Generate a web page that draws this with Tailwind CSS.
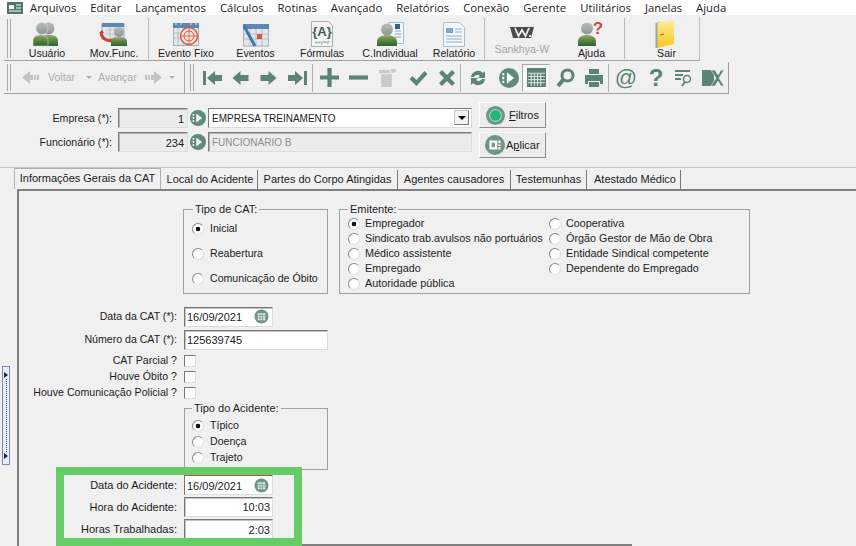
<!DOCTYPE html>
<html lang="en">
<head>
<meta charset="UTF-8">
<title>Sankhya CAT</title>
<script src="https://cdn.jsdelivr.net/npm/@tailwindcss/browser@4"></script>
</head>
<body class="bg-[#f0f0f0] h-[546px] w-[856px] overflow-hidden relative font-['Liberation_Sans',sans-serif] text-[11px] text-[#1c1c1c]">

<svg class="absolute w-0 h-0">
  <defs>
    <linearGradient id="body" x1="0" y1="0" x2="0" y2="1"><stop offset="0" stop-color="#9aa88c"/><stop offset=".45" stop-color="#5f8a34"/><stop offset="1" stop-color="#2f5f45"/></linearGradient>
    <linearGradient id="head" x1="0" y1="0" x2="0" y2="1"><stop offset="0" stop-color="#b9bdba"/><stop offset="1" stop-color="#8f9692"/></linearGradient>
    <linearGradient id="door" x1="0" y1="0" x2="0" y2="1"><stop offset="0" stop-color="#fdeb9a"/><stop offset="1" stop-color="#f7c81c"/></linearGradient>
  </defs>
  <symbol id="nav" viewBox="0 0 16 14"><path d="M0 7 8 0v4h8v6H8v4z" fill="currentColor"/></symbol>
  <symbol id="pick" viewBox="0 0 14 14"><circle cx="7" cy="7" r="7" fill="#5f8b78"/><path d="M5.500 3l5 4-5 4z" fill="#fff"/><path d="M3 3.500v1.500M3 6.200v1.600M3 9v1.500" stroke="#fff" stroke-width="1.300"/></symbol>
  <symbol id="cal" viewBox="0 0 16 16"><circle cx="8" cy="8" r="7.500" fill="#6f9684"/><rect x="4" y="4.500" width="8" height="7.500" fill="#dfe8e3"/><path d="M4 7h8M4 9.500h8M6.500 4.500v7.500M9 4.500v7.500" stroke="#6f9684" stroke-width=".7"/></symbol>
</svg>

<!-- Menu -->
<nav class="h-[15px] bg-white flex items-center pl-[7px] gap-[14px] text-[11.3px] font-['Open_Sans',sans-serif] text-[#222] leading-none">
  <svg class="w-[16px] h-[12px] -mr-[7px]" viewBox="0 0 16 12"><rect width="16" height="12" fill="#4d7a68"/><rect x="2" y="3" width="5" height="4" fill="#fff"/><path d="M9 3h5M9 6h5M2 9h12" stroke="#fff"/></svg>
  <span>Arquivos</span><span>Editar</span><span>Lançamentos</span><span>Cálculos</span><span>Rotinas</span><span>Avançado</span><span>Relatórios</span><span>Conexão</span><span>Gerente</span><span>Utilitários</span><span>Janelas</span><span>Ajuda</span>
</nav>

<!-- Toolbar 1 -->
<div class="mt-[2px] ml-[4px] w-[696px] h-[44px] flex border-b border-[#a0a0a0] border-r border-r-[#c0c0c0] text-[10.6px] leading-[11px]">
  <div class="w-[10px] flex gap-[2px] pl-[3px] py-[2px] shrink-0"><i class="w-[1px] bg-[#a8a8a8]"></i><i class="w-[1px] bg-[#a8a8a8]"></i></div>
  <button class="w-[66px] flex flex-col items-center pt-[3px]">
    <span class="h-[28px] flex items-center"><svg class="w-[25px] h-[25px] mr-[4px]" viewBox="0 0 25 25"><circle cx="15.500" cy="6.500" r="6" fill="url(#head)"/><circle cx="9" cy="6.500" r="6" fill="url(#head)" stroke="#d8dad8" stroke-width=".6"/><path d="M8 13h9c5 0 8 2 8 6v5H8z" fill="url(#body)"/><path d="M0 24v-5c0-4 3-6 7-6s8 2 8 6v5z" fill="url(#body)" stroke="#cfd6c8" stroke-width=".6"/></svg></span>
    <span>Usuário</span></button>
  <button class="w-[68px] flex flex-col items-center pt-[3px]">
    <span class="h-[28px] flex items-center"><svg class="w-[28px] h-[24px] mr-[2px]" viewBox="0 0 28 24"><rect x="3" y="2" width="22" height="15" fill="#dfe5ea" stroke="#9fb0bd"/><rect x="3" y="1" width="22" height="4" fill="#5d87b5"/><path d="M7 8h16M7 12h16M11 5v12M16 5v12" stroke="#a9b4bb" stroke-width=".7"/><path d="M2 11c1 6 7 9 12 7" stroke="#c8402e" stroke-width="3" fill="none"/><path d="M0 11h5l-2-3z" fill="#c8402e"/><circle cx="20" cy="10" r="5" fill="url(#head)"/><path d="M12 24v-4c0-4 3-5 8-5s8 1 8 5v4z" fill="url(#body)"/></svg></span>
    <span>Mov.Func.</span></button>
  <i class="w-[1px] bg-[#b8b8b8] my-[1px]"></i>
  <button class="w-[74px] flex flex-col items-center pt-[3px]">
    <span class="h-[28px] flex items-center"><svg class="w-[26px] h-[24px]" viewBox="0 0 26 24"><rect x=".5" y="2" width="25" height="21.500" fill="#e4e8ec" stroke="#a5b0b8"/><rect x="0" y="1" width="26" height="5" fill="#5d87b5"/><path d="M3 0v3M8 0v3M18 0v3M23 0v3" stroke="#e8eef3"/><path d="M1 11h12M1 16h12M5 6v17M10 6v17" stroke="#a5b0b8" stroke-width=".7"/><circle cx="16" cy="14" r="8.500" fill="#f3e4de" stroke="#d9573f" stroke-width="1.400"/><circle cx="16" cy="14" r="5" fill="none" stroke="#d9573f"/><path d="M7.500 14h17M16 5.500v17" stroke="#d9573f" stroke-width=".8"/></svg></span>
    <span>Evento Fixo</span></button>
  <button class="w-[65px] flex flex-col items-center pt-[3px]">
    <span class="h-[28px] flex items-center"><svg class="w-[26px] h-[24px] mt-[1px]" viewBox="0 0 26 24"><rect x=".5" y="2" width="25" height="21" fill="#e4e8ec" stroke="#a5b0b8"/><rect x="0" y="1" width="26" height="5" fill="#5d87b5"/><path d="M1 11h24M1 16h24M7 6v17M13 6v17M19 6v17" stroke="#a5b0b8" stroke-width=".7"/><path d="M1 3l11 20" stroke="#3f76a8" stroke-width="3"/><rect x="14" y="11" width="5" height="5" fill="#d9573f"/></svg></span>
    <span>Eventos</span></button>
  <button class="w-[68px] flex flex-col items-center pt-[3px]">
    <span class="h-[28px] flex items-center"><svg class="w-[22px] h-[26px]" viewBox="0 0 22 26"><path d="M.5.500h17l4 4v21H.5z" fill="#f4f4f2" stroke="#a8aea8"/><text x="11" y="15" text-anchor="middle" font-size="13" font-weight="700" font-family="Liberation Sans" fill="#3d5f50">{A}</text><text x="11" y="23" text-anchor="middle" font-size="5.500" font-family="Liberation Sans" fill="#6f8a7d">x+y=z</text></svg></span>
    <span>Fórmulas</span></button>
  <button class="w-[68px] flex flex-col items-center pt-[3px]">
    <span class="h-[28px] flex items-center"><svg class="w-[27px] h-[24px]" viewBox="0 0 27 24"><rect x="11.500" y=".5" width="15" height="21" fill="#f2f5f8" stroke="#a9bccb"/><path d="M18 9h6M18 12h6M18 15h6" stroke="#8ba6bd"/><rect x="18" y="2" width="5" height="5" fill="#2f5f8a"/><circle cx="10" cy="7.500" r="6" fill="url(#head)"/><path d="M0 24v-4c0-5 5-7 10-7s10 2 10 7v4z" fill="url(#body)"/></svg></span>
    <span>C.Individual</span></button>
  <button class="w-[60px] flex flex-col items-center pt-[3px]">
    <span class="h-[28px] flex items-center"><svg class="w-[22px] h-[25px]" viewBox="0 0 22 25"><path d="M.5.500h16l5 5v19H.5z" fill="#f3f7fa" stroke="#a9bccb"/><rect x="3" y="6" width="7" height="5" fill="#7aa7cf"/><path d="M12 7h7M12 10h7M3 14h16M3 17h16M3 20h16" stroke="#8ab0d0"/></svg></span>
    <span>Relatório</span></button>
  <i class="w-[1px] bg-[#b8b8b8] my-[1px]"></i>
  <button class="w-[74px] flex flex-col items-center pt-[3px]">
    <span class="h-[24px] flex items-center"><svg class="w-[24px] h-[13px]" viewBox="0 0 24 13"><path d="M0 1h24l-3 11H3z" fill="#4c4c4c"/><path d="M5 2l3.500 8 3.500-6 3.500 6L19 2" stroke="#f0f0f0" stroke-width="1.800" fill="none"/><rect x="19" y="9" width="2" height="2" fill="#f0f0f0"/></svg></span>
    <span class="text-[#a3a3a3]">Sankhya-W</span></button>
  <button class="w-[65px] flex flex-col items-center pt-[3px]">
    <span class="h-[28px] flex items-center"><svg class="w-[27px] h-[24px] overflow-visible" viewBox="0 0 27 24"><circle cx="9" cy="6.500" r="6" fill="url(#head)"/><path d="M0 24v-4c0-5 4-7 9-7s9 2 9 7v4z" fill="url(#body)"/><text x="20" y="12" text-anchor="middle" font-size="17" font-weight="700" font-family="Liberation Sans" fill="#c0504d">?</text></svg></span>
    <span>Ajuda</span></button>
  <i class="w-[1px] bg-[#b8b8b8] my-[1px]"></i>
  <button class="flex-1 flex flex-col items-center pt-[3px]">
    <span class="h-[28px] flex items-center"><svg class="w-[20px] h-[28px] ml-[5px]" viewBox="0 0 20 28"><path d="M2 2h16v22H2z" fill="#bfc4c8"/><path d="M2 3 19 0v24L2 28z" fill="url(#door)"/><path d="M1.500 3v25" stroke="#a3a3a3" stroke-width="2"/><path d="M5 15l4-1" stroke="#8a6d10"/></svg></span>
    <span class="ml-[9px]">Sair</span></button>
</div>

<!-- Toolbar 2 -->
<div class="ml-[4px] mt-[1px] w-[725px] h-[32px] flex items-center text-[#5a8573] border-b border-[#a0a0a0] border-r border-r-[#a0a0a0] text-[10.6px]">
  <div class="w-[10px] h-full flex gap-[2px] pl-[3px] py-[2px] shrink-0"><i class="w-[1px] bg-[#a8a8a8]"></i><i class="w-[1px] bg-[#a8a8a8]"></i></div>
  <div class="w-[171px] h-full flex items-center shrink-0 pl-[8px] border-r border-[#a8a8a8] text-[#ababab]">
    <svg class="w-[19px] h-[13px] shrink-0" viewBox="0 0 19 13"><path d="M0 6.500 8 0v4h3v5H8v4zM12 4h2v5h-2zM15 4h2v5h-2z" fill="#c4c4c4"/></svg>
    <span class="ml-[7px]">Voltar</span>
    <i class="ml-[11px] w-0 h-0 border-x-[3px] border-x-transparent border-t-[3px] border-t-[#b0b0b0]"></i>
    <span class="ml-[6px]">Avançar</span>
    <svg class="w-[19px] h-[13px] ml-[6px] shrink-0" viewBox="0 0 19 13"><path d="M19 6.500 11 0v4H8v5h3v4zM7 4H5v5h2zM4 4H2v5h2z" fill="#c4c4c4"/></svg>
    <i class="ml-[7px] w-0 h-0 border-x-[3px] border-x-transparent border-t-[3px] border-t-[#b0b0b0]"></i>
  </div>
  <div class="w-[13px] h-full flex gap-[2px] pl-[5px] py-[2px] shrink-0"><i class="w-[1px] bg-[#a8a8a8]"></i><i class="w-[1px] bg-[#a8a8a8]"></i></div>
  <button class="w-[28px] flex justify-center"><svg class="w-[19px] h-[14px]" viewBox="0 0 19 14"><path d="M0 0h3v14H0zM4 7l8-7v4h7v6h-7v4z" fill="currentColor"/></svg></button>
  <button class="w-[28px] flex justify-center"><svg class="w-[17px] h-[14px]"><use href="#nav"/></svg></button>
  <button class="w-[28px] flex justify-center"><svg class="w-[17px] h-[14px] -scale-x-100"><use href="#nav"/></svg></button>
  <button class="w-[30px] flex justify-center"><svg class="w-[19px] h-[14px]" viewBox="0 0 19 14"><path d="M19 0h-3v14h3zM15 7 7 0v4H0v6h7v4z" fill="currentColor"/></svg></button>
  <i class="w-[1px] h-[28px] bg-[#b0b0b0]"></i>
  <button class="w-[32px] flex justify-center"><svg class="w-[19px] h-[19px]" viewBox="0 0 18 18"><path d="M7 0h4v7h7v4h-7v7H7v-7H0V7h7z" fill="currentColor"/></svg></button>
  <button class="w-[27px] flex justify-center"><svg class="w-[19px] h-[19px]" viewBox="0 0 18 18"><path d="M0 7h18v4H0z" fill="currentColor"/></svg></button>
  <button class="w-[31px] flex justify-center"><svg class="w-[19px] h-[19px]" viewBox="0 0 18 18"><path d="M3 6h10v12H3zM1 2h10l1 3H1zM12 1h5v3l-4 1z" fill="#c9c9c9"/></svg></button>
  <button class="w-[30px] flex justify-center"><svg class="w-[19px] h-[18px]" viewBox="0 0 18 18"><path d="M0 10l3-3 4 4 8-9 3 3L7 17z" fill="currentColor"/></svg></button>
  <button class="w-[27px] flex justify-center"><svg class="w-[18px] h-[18px]" viewBox="0 0 18 18"><path d="M1 4l3-3 5 5 5-5 3 3-5 5 5 5-3 3-5-5-5 5-3-3 5-5z" fill="currentColor"/></svg></button>
  <i class="w-[1px] h-[28px] bg-[#b0b0b0]"></i>
  <button class="w-[34px] flex justify-center"><svg class="w-[20px] h-[20px]" viewBox="0 0 20 20"><path d="M3 9a7 7 0 0 1 12-4l2-2v7h-7l2-2a4 4 0 0 0-6 1zM17 11a7 7 0 0 1-12 4l-2 2v-7h7l-2 2a4 4 0 0 0 6-1z" fill="currentColor"/></svg></button>
  <button class="w-[27px] flex justify-center"><svg class="w-[20px] h-[20px]"><use href="#pick"/></svg></button>
  <button class="w-[28px] h-[28px] flex items-center justify-center border border-t-[#a8a8a8] border-l-[#a8a8a8] border-r-[#e8e8e8] border-b-[#e8e8e8] bg-[#f8f8f8]"><svg class="w-[19px] h-[19px]" viewBox="0 0 18 18"><rect width="18" height="18" fill="currentColor"/><path d="M1 5h16M1 8h16M1 11h16M1 14h16M4 5v12M7 5v12M10 5v12M13 5v12" stroke="#f0f0f0" stroke-width=".8"/></svg></button>
  <button class="w-[30px] flex justify-center"><svg class="w-[20px] h-[20px]" viewBox="0 0 20 20"><circle cx="12.500" cy="7.500" r="5.500" fill="none" stroke="currentColor" stroke-width="3"/><path d="M8 12l-5 6" stroke="currentColor" stroke-width="4"/></svg></button>
  <button class="w-[28px] flex justify-center"><svg class="w-[20px] h-[20px]" viewBox="0 0 20 20"><path d="M5 1h10v5H5zM1 7h18v9h-3v-3H4v3H1zM5 14h10v5H5z" fill="currentColor"/></svg></button>
  <i class="w-[1px] h-[28px] bg-[#b0b0b0]"></i>
  <button class="w-[34px] flex justify-center text-[22px] leading-none">@</button>
  <button class="w-[26px] flex justify-center text-[24px] leading-none font-bold">?</button>
  <button class="w-[30px] flex justify-center"><svg class="w-[20px] h-[20px]" viewBox="0 0 20 20"><path d="M1 3h15M1 7h8M1 11h6" stroke="currentColor" stroke-width="2"/><circle cx="13" cy="11" r="3.500" fill="none" stroke="currentColor" stroke-width="1.500"/><path d="M11 14l-3 4" stroke="currentColor" stroke-width="2"/></svg></button>
  <button class="w-[28px] flex justify-center"><svg class="w-[22px] h-[18px]" viewBox="0 0 22 18"><path d="M0 1h12v16H0z" fill="currentColor"/><path d="M9 1l4 0 3 5 3-5h3l-5 8 5 8h-3l-3-5-3 5H9l5-8z" fill="currentColor" stroke="#f0f0f0" stroke-width=".6"/></svg></button>
</div>

<!-- Empresa / Funcionario -->
<section class="h-[74px] pl-[18px] flex border-b border-[#c4c4c4] text-[10.6px]">
  <div class="pt-[14px] flex flex-col gap-[4px]">
    <div class="flex items-center h-[20px]">
      <label class="w-[94px] text-right mr-[6px] pt-[2px]">Empresa (*):</label>
      <div class="w-[70px] h-[20px] bg-[#ececec] border border-[#7c7c7c] border-r-[#dcdcdc] border-b-[#dcdcdc] shadow-[inset_1px_1px_0_#b4b4b4] text-right pr-[3px] leading-[20px] text-[11px]">1</div>
      <svg class="w-[16px] h-[16px] mx-[2px]"><use href="#pick"/></svg>
      <div class="w-[264px] h-[20px] bg-white border border-[#7c7c7c] border-r-[#dcdcdc] border-b-[#dcdcdc] pl-[3px] leading-[20px] text-[10px] flex justify-between">EMPRESA TREINAMENTO<span class="w-[15px] h-[15px] mt-[1px] mr-[2px] bg-[#f2f2f2] border border-[#c8c8c8] border-r-[#777] border-b-[#777] flex items-center justify-center"><i class="w-0 h-0 border-x-[4px] border-x-transparent border-t-[4px] border-t-black"></i></span></div>
    </div>
    <div class="flex items-center h-[20px]">
      <label class="w-[94px] text-right mr-[6px] pt-[2px]">Funcionário (*):</label>
      <div class="w-[70px] h-[20px] bg-[#ececec] border border-[#7c7c7c] border-r-[#dcdcdc] border-b-[#dcdcdc] shadow-[inset_1px_1px_0_#b4b4b4] text-right pr-[3px] leading-[20px] text-[11px]">234</div>
      <svg class="w-[16px] h-[16px] mx-[2px]"><use href="#pick"/></svg>
      <div class="w-[264px] h-[20px] bg-[#ececec] border border-[#7c7c7c] border-r-[#dcdcdc] border-b-[#dcdcdc] shadow-[inset_1px_1px_0_#b4b4b4] pl-[3px] leading-[20px] text-[10px] text-[#8c8c8c]">FUNCIONARIO B</div>
    </div>
  </div>
  <div class="ml-[7px] pt-[8px] flex flex-col gap-[4px] text-[11px]">
    <button class="w-[67px] h-[26px] bg-[#ececec] border border-white border-b-[#8c8c8c] border-r-[#8c8c8c] flex items-center pl-[6px] gap-[4px]"><svg class="w-[19px] h-[19px]" viewBox="0 0 18 18"><circle cx="9" cy="9" r="9" fill="#6f9684"/><circle cx="9" cy="9" r="5.500" fill="#22b573" stroke="#e4f0e8" stroke-width=".7"/></svg><span><u>F</u>iltros</span></button>
    <button class="w-[67px] h-[26px] bg-[#ececec] border border-white border-b-[#8c8c8c] border-r-[#8c8c8c] flex items-center pl-[5px] gap-[1px]"><svg class="w-[20px] h-[20px]" viewBox="0 0 18 18"><circle cx="9" cy="9" r="9" fill="#6f9684"/><path d="M4 5h7v8H4zM12 5h2v2.500h-2zM12 8.500h2v1.500h-2zM12 11h2v2h-2z" fill="#fff"/><rect x="6" y="7" width="3" height="4" fill="#6f9684"/></svg><span>A<u>p</u>licar</span></button>
  </div>
</section>

<!-- Tabs -->
<div class="h-[21px] pl-[14px] flex items-end">
  <div class="w-[147px] h-[21px] border border-[#b0b0b0] border-b-0 text-center leading-[19px]">Informações Gerais da CAT</div>
  <div class="ml-[2px] w-[95px] h-[19px] border-r border-[#777] text-center leading-[18px]">Local do Acidente</div>
  <div class="w-[140px] h-[19px] border-r border-[#777] text-center leading-[18px]">Partes do Corpo Atingidas</div>
  <div class="w-[113px] h-[19px] border-r border-[#777] text-center leading-[18px]">Agentes causadores</div>
  <div class="w-[76px] h-[19px] border-r border-[#777] text-center leading-[18px]">Testemunhas</div>
  <div class="w-[94px] h-[19px] border-r border-[#777] pl-[3px] text-center leading-[18px]">Atestado Médico</div>
</div>

<!-- Form -->
<main class="ml-[17px] h-[357px] border-l-2 border-t-2 border-[#808080]">
  <div class="flex pl-[164px] pt-[13px] gap-[11px]">
    <fieldset class="w-[145px] h-[90px] border border-[#a0a0a0] pl-[8px] text-[10.6px]">
      <legend class="ml-[1px] px-[2px] -mb-[2px] leading-none text-[11px]">Tipo de CAT:</legend>
      <div class="flex flex-col gap-[13px] mt-[10px]">
        <label class="flex items-center gap-[6px] h-[12px]"><input type="radio" name="t" checked class="appearance-none w-[12px] h-[12px] rounded-full border border-[#8a8a8a] border-r-[#e0e0e0] border-b-[#e0e0e0] bg-[radial-gradient(circle,#111_2px,#fff_2.6px)]"><span>Inicial</span></label>
        <label class="flex items-center gap-[6px] h-[12px]"><input type="radio" name="t" class="appearance-none w-[12px] h-[12px] rounded-full bg-white border border-[#8a8a8a] border-r-[#e0e0e0] border-b-[#e0e0e0]"><span>Reabertura</span></label>
        <label class="flex items-center gap-[6px] h-[12px]"><input type="radio" name="t" class="appearance-none w-[12px] h-[12px] rounded-full bg-white border border-[#8a8a8a] border-r-[#e0e0e0] border-b-[#e0e0e0]"><span>Comunicação de Óbito</span></label>
      </div>
    </fieldset>
    <fieldset class="w-[411px] h-[90px] border border-[#a0a0a0] pl-[8px] text-[10.8px]">
      <legend class="px-[2px] -mb-[2px] leading-none text-[11px]">Emitente:</legend>
      <div class="grid grid-cols-[201px_1fr] grid-rows-[repeat(5,15px)] grid-flow-col mt-[3px] items-center">
        <label class="flex items-center gap-[5px]"><input type="radio" name="e" checked class="appearance-none w-[12px] h-[12px] rounded-full border border-[#8a8a8a] border-r-[#e0e0e0] border-b-[#e0e0e0] bg-[radial-gradient(circle,#111_2px,#fff_2.6px)]"><span>Empregador</span></label>
        <label class="flex items-center gap-[5px]"><input type="radio" name="e" class="appearance-none w-[12px] h-[12px] rounded-full bg-white border border-[#8a8a8a] border-r-[#e0e0e0] border-b-[#e0e0e0]"><span>Sindicato trab.avulsos não portuários</span></label>
        <label class="flex items-center gap-[5px]"><input type="radio" name="e" class="appearance-none w-[12px] h-[12px] rounded-full bg-white border border-[#8a8a8a] border-r-[#e0e0e0] border-b-[#e0e0e0]"><span>Médico assistente</span></label>
        <label class="flex items-center gap-[5px]"><input type="radio" name="e" class="appearance-none w-[12px] h-[12px] rounded-full bg-white border border-[#8a8a8a] border-r-[#e0e0e0] border-b-[#e0e0e0]"><span>Empregado</span></label>
        <label class="flex items-center gap-[5px]"><input type="radio" name="e" class="appearance-none w-[12px] h-[12px] rounded-full bg-white border border-[#8a8a8a] border-r-[#e0e0e0] border-b-[#e0e0e0]"><span>Autoridade pública</span></label>
        <label class="flex items-center gap-[5px]"><input type="radio" name="e" class="appearance-none w-[12px] h-[12px] rounded-full bg-white border border-[#8a8a8a] border-r-[#e0e0e0] border-b-[#e0e0e0]"><span>Cooperativa</span></label>
        <label class="flex items-center gap-[5px]"><input type="radio" name="e" class="appearance-none w-[12px] h-[12px] rounded-full bg-white border border-[#8a8a8a] border-r-[#e0e0e0] border-b-[#e0e0e0]"><span>Órgão Gestor de Mão de Obra</span></label>
        <label class="flex items-center gap-[5px]"><input type="radio" name="e" class="appearance-none w-[12px] h-[12px] rounded-full bg-white border border-[#8a8a8a] border-r-[#e0e0e0] border-b-[#e0e0e0]"><span>Entidade Sindical competente</span></label>
        <label class="flex items-center gap-[5px]"><input type="radio" name="e" class="appearance-none w-[12px] h-[12px] rounded-full bg-white border border-[#8a8a8a] border-r-[#e0e0e0] border-b-[#e0e0e0]"><span>Dependente do Empregado</span></label>
      </div>
    </fieldset>
  </div>

  <div class="mt-[13px] flex items-center h-[20px]">
    <label class="w-[158px] text-right mr-[7px] text-[10.6px]">Data da CAT (*):</label>
    <div class="w-[89px] h-[20px] bg-white border border-[#777] border-r-[#dcdcdc] border-b-[#dcdcdc] shadow-[inset_1px_1px_0_#c4c4c4] pl-[2px] leading-[18px] flex justify-between">16/09/2021<svg class="w-[15px] h-[15px] mt-[1px] mr-[3px]"><use href="#cal"/></svg></div>
  </div>
  <div class="mt-[3px] flex items-center h-[20px]">
    <label class="w-[158px] text-right mr-[7px] text-[10.6px]">Número da CAT (*):</label>
    <div class="w-[144px] h-[20px] bg-white border border-[#777] border-r-[#dcdcdc] border-b-[#dcdcdc] shadow-[inset_1px_1px_0_#c4c4c4] pl-[2px] leading-[18px]">125639745</div>
  </div>
  <div class="mt-[3px] flex items-center h-[16px] text-[10.6px]"><label class="w-[158px] text-right mr-[7px]">CAT Parcial ?</label><span class="w-[12px] h-[12px] bg-white border border-[#777] border-r-[#dcdcdc] border-b-[#dcdcdc]"></span></div>
  <div class="flex items-center h-[16px] text-[10.6px]"><label class="w-[158px] text-right mr-[7px]">Houve Óbito ?</label><span class="w-[12px] h-[12px] bg-white border border-[#777] border-r-[#dcdcdc] border-b-[#dcdcdc]"></span></div>
  <div class="flex items-center h-[16px] text-[10.6px]"><label class="w-[158px] text-right mr-[7px]">Houve Comunicação Policial ?</label><span class="w-[12px] h-[12px] bg-white border border-[#777] border-r-[#dcdcdc] border-b-[#dcdcdc]"></span></div>

  <fieldset class="ml-[165px] mt-[2px] w-[144px] h-[67px] border border-[#a0a0a0] pl-[7px]">
    <legend class="px-[2px] -mb-[2px] leading-none">Tipo do Acidente:</legend>
    <div class="grid auto-rows-[16px] items-center mt-[6px] text-[10.6px]">
      <label class="flex items-center gap-[6px]"><input type="radio" name="a" checked class="appearance-none w-[12px] h-[12px] rounded-full border border-[#8a8a8a] border-r-[#e0e0e0] border-b-[#e0e0e0] bg-[radial-gradient(circle,#111_2px,#fff_2.6px)]"><span>Típico</span></label>
      <label class="flex items-center gap-[6px]"><input type="radio" name="a" class="appearance-none w-[12px] h-[12px] rounded-full bg-white border border-[#8a8a8a] border-r-[#e0e0e0] border-b-[#e0e0e0]"><span>Doença</span></label>
      <label class="flex items-center gap-[6px]"><input type="radio" name="a" class="appearance-none w-[12px] h-[12px] rounded-full bg-white border border-[#8a8a8a] border-r-[#e0e0e0] border-b-[#e0e0e0]"><span>Trajeto</span></label>
    </div>
  </fieldset>

  <div class="mt-[5px] flex items-center h-[20px]">
    <label class="w-[158px] text-right mr-[7px]">Data do Acidente:</label>
    <div class="w-[89px] h-[20px] bg-white border border-[#777] border-t-[#c0504d] border-r-[#dcdcdc] border-b-[#dcdcdc] pl-[2px] leading-[20px] flex justify-between">16/09/2021<svg class="w-[15px] h-[15px] mt-[2px] mr-[3px]"><use href="#cal"/></svg></div>
  </div>
  <div class="mt-[2px] flex items-center h-[20px]">
    <label class="w-[158px] text-right mr-[7px]">Hora do Acidente:</label>
    <div class="w-[89px] h-[20px] bg-white border border-[#777] border-r-[#dcdcdc] border-b-[#dcdcdc] shadow-[inset_1px_1px_0_#c4c4c4] pr-[2px] text-right leading-[18px]">10:03</div>
  </div>
  <div class="mt-[2px] flex items-center h-[20px]">
    <label class="w-[158px] text-right mr-[7px]">Horas Trabalhadas:</label>
    <div class="w-[89px] h-[20px] bg-white border border-[#777] border-r-[#dcdcdc] border-b-[#dcdcdc] shadow-[inset_1px_1px_0_#c4c4c4] pr-[2px] text-right leading-[20px]">2:03</div>
  </div>
</main>

<!-- splitter handle -->
<div class="absolute left-[2px] top-[366px] w-[8px] h-[99px] bg-[#e8ecf4] border border-[#7f8bb0] flex flex-col items-center justify-between py-[5px]">
  <i class="w-0 h-0 border-y-[3px] border-y-transparent border-l-[4px] border-l-[#14264f]"></i>
  <i class="flex-1 border-l border-dotted border-[#555] my-[1px]"></i>
  <i class="w-0 h-0 border-y-[3px] border-y-transparent border-l-[4px] border-l-[#14264f]"></i>
</div>

<!-- green highlight annotation -->
<div class="absolute left-[56px] top-[467px] w-[246px] h-[79px] border-[8px] border-[#66cc66]"></div>
<div class="absolute left-[302px] top-[544px] w-[330px] h-[2px] bg-[#808080]"></div>
</body>
</html>
